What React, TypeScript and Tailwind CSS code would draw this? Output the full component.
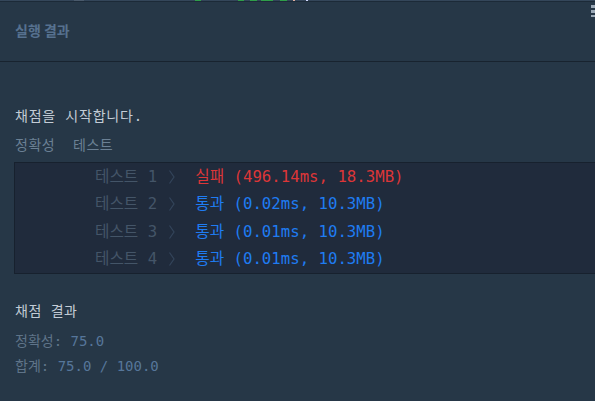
import React from "react";

const mono = "font-['DejaVu_Sans_Mono','Noto_Sans_CJK_KR',monospace]";

function Chevron() {
  return (
    <svg width="8" height="16" viewBox="0 0 8 16" className="shrink-0">
      <polyline points="1.5,1.5 6,8 1.5,14.5" fill="none" stroke="#33445a" strokeWidth="1.2" />
    </svg>
  );
}

const rows = [
  { n: 1, ok: false, t: "(496.14ms, 18.3MB)" },
  { n: 2, ok: true, t: "(0.02ms, 10.3MB)" },
  { n: 3, ok: true, t: "(0.01ms, 10.3MB)" },
  { n: 4, ok: true, t: "(0.01ms, 10.3MB)" },
];

export default function App() {
  return (
    <div className="relative w-[595px] h-[401px] overflow-hidden bg-[#263747]">
      {/* top strip (cut-off editor line) */}
      <div className="h-[2px] bg-[#34465a] border-b border-[#1c2a38] flex items-start">
        <div className="ml-[74px] w-[10px] h-[1px] bg-[#4a5a6c]" />
        <div className="ml-[111px] w-[6px] h-[1px] bg-[#2f9e4a]" />
        <div className="ml-[37px] w-[6px] h-[1px] bg-[#2f9e4a]" />
        <div className="ml-[6px] w-[7px] h-[1px] bg-[#2f9e4a]" />
        <div className="ml-[4px] w-[12px] h-[1px] bg-[#2f9e4a]" />
        <div className="ml-[7px] w-[7px] h-[1px] bg-[#2f9e4a]" />
        <div className="ml-[6px] w-[2px] h-[1px] bg-[#e0b0a0]" />
        <div className="ml-[11px] w-[2px] h-[1px] bg-[#d0d8ff]" />
      </div>
      {/* hamburger overlay */}
      <div className="absolute top-[5px] left-[591px] flex flex-col gap-[2px]">
        <div className="w-[8px] h-[3px] bg-[#9aa8b6]" />
        <div className="w-[8px] h-[3px] bg-[#9aa8b6]" />
        <div className="w-[8px] h-[2px] bg-[#9aa8b6]" />
      </div>

      {/* header */}
      <div className="h-[60px] pl-[15px] pb-[3px] flex items-center border-b border-[#18232f]">
        <span className="font-['Noto_Sans_CJK_KR',sans-serif] font-bold text-[14px] text-[#56718f]">
          실행 결과
        </span>
      </div>

      {/* content */}
      <div className={`px-[15px] ${mono} text-[14px] flex flex-col`}>
        <div className="mt-[44px] leading-[20px] text-[#c3ccd6] tracking-[0.8px]">채점을 시작합니다.</div>
        <div className="mt-[9px] leading-[20px] text-[#6b8094] whitespace-pre tracking-[0.5px]">정확성  테스트</div>

        <div className="mt-[7px] -ml-[1px] -mr-[30px] bg-[#202b3c] border border-[#17212e] flex flex-col">
          {rows.map((r) => (
            <div key={r.n} className="h-[27.5px] flex items-center pl-[80px] text-[15.7px] whitespace-pre">
              <span className="text-[#445568]">테스트 {r.n}</span>
              <span className="ml-[11px] mr-[19px] flex items-center">
                <Chevron />
              </span>
              <span className={r.ok ? "text-[#1f7cf2]" : "text-[#dd3638]"}>
                {r.ok ? "통과" : "실패"} {r.t}
              </span>
            </div>
          ))}
        </div>

        <div className="mt-[27px] leading-[20px] text-[#c3ccd6] tracking-[0.5px]">채점 결과</div>
        <div className="mt-[10px] leading-[20px] whitespace-pre">
          <span className="text-[#5f7489]">정확성: </span>
          <span className="text-[#56769a]">75.0</span>
        </div>
        <div className="mt-[5px] leading-[20px] whitespace-pre">
          <span className="text-[#5f7489]">합계: </span>
          <span className="text-[#56769a]">75.0 / 100.0</span>
        </div>
      </div>
    </div>
  );
}
